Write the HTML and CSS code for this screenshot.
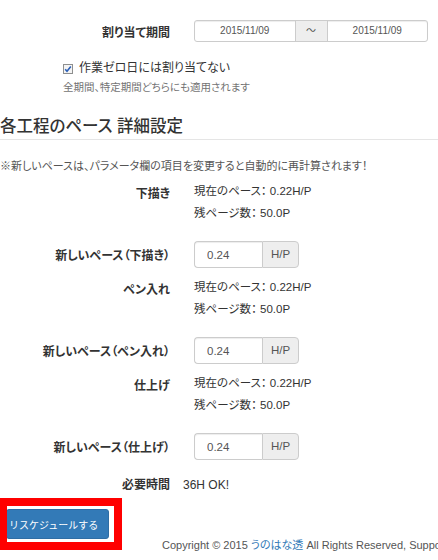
FILE: index.html
```html
<!DOCTYPE html>
<html lang="ja">
<head>
    <meta charset="UTF-8">
    <meta name="viewport" content="width=device-width, initial-scale=1.0">
    <title>リスケジュール</title>
    <link rel="stylesheet" href="styles.css">
</head>
<body>
    <div class="page">
        <div class="form-row period-row">
            <label class="row-label">割り当て期間</label>
            <div class="date-group">
                <span class="date-input">2015/11/09</span>
                <span class="addon tilde">〜</span>
                <span class="date-input">2015/11/09</span>
            </div>
        </div>

        <div class="skip-zero">
            <label class="check">
                <svg class="check-box" width="10" height="10" viewBox="0 0 10 10">
                    <rect x="0.5" y="0.5" width="9" height="9" fill="#f4f4f4" stroke="#8e8f8f"/>
                    <path d="M2.2 5.2 L4 7.2 L7.8 2.6" fill="none" stroke="#2a5fb8" stroke-width="1.6"/>
                </svg>
                作業ゼロ日には割り当てない
            </label>
            <p class="help">全期間、特定期間どちらにも適用されます</p>
        </div>

        <h3 class="section-title">各工程のペース 詳細設定</h3>
        <p class="note">※新しいペースは、パラメータ欄の項目を変更すると自動的に再計算されます！</p>

        <!-- 下描き -->
        <div class="form-row process first">
            <div class="row-label">下描き</div>
            <div class="info">
                <p>現在のペース： 0.22H/P</p>
                <p>残ページ数： 50.0P</p>
            </div>
        </div>
        <div class="form-row pace">
            <label class="row-label">新しいペース（下描き）</label>
            <div class="pace-group">
                <input type="text" value="0.24">
                <span class="addon">H/P</span>
            </div>
        </div>

        <!-- ペン入れ -->
        <div class="form-row process">
            <div class="row-label">ペン入れ</div>
            <div class="info">
                <p>現在のペース： 0.22H/P</p>
                <p>残ページ数： 50.0P</p>
            </div>
        </div>
        <div class="form-row pace">
            <label class="row-label">新しいペース（ペン入れ）</label>
            <div class="pace-group">
                <input type="text" value="0.24">
                <span class="addon">H/P</span>
            </div>
        </div>

        <!-- 仕上げ -->
        <div class="form-row process">
            <div class="row-label">仕上げ</div>
            <div class="info">
                <p>現在のペース： 0.22H/P</p>
                <p>残ページ数： 50.0P</p>
            </div>
        </div>
        <div class="form-row pace">
            <label class="row-label">新しいペース（仕上げ）</label>
            <div class="pace-group">
                <input type="text" value="0.24">
                <span class="addon">H/P</span>
            </div>
        </div>

        <div class="form-row total">
            <div class="row-label">必要時間</div>
            <div class="total-value">36H OK!</div>
        </div>

        <div class="actions">
            <div class="highlight">
                <button type="button" class="btn-primary">リスケジュールする</button>
            </div>
            <p class="copyright">Copyright © 2015 <a href="#">うのはな透</a> All Rights Reserved, Suppo</p>
        </div>
    </div>
</body>
</html>
```

FILE: styles.css
```css
html, body {
    margin: 0;
    overflow: hidden;
}
body {
    font-family: "Liberation Sans", "Noto Sans CJK JP", sans-serif;
    font-size: 12px;
    color: #333;
    background: #fff;
    font-feature-settings: "palt";
}
p {
    margin: 0;
}
.page {
    padding-top: 20px;
}
.form-row {
    display: grid;
    grid-template-columns: 170px 1fr;
    column-gap: 24px;
    align-items: center;
}
.row-label {
    text-align: right;
    font-size: 12px;
    font-weight: bold;
    white-space: nowrap;
}
.period-row .row-label {
    padding-left: 2px;
}
.date-group {
    display: flex;
    width: 234px;
    height: 22px;
    border: 1px solid #ccc;
    border-radius: 3px;
    box-sizing: border-box;
    box-shadow: inset 0 1px 1px rgba(0, 0, 0, 0.075);
}
.date-input {
    flex: 1;
    text-align: center;
    line-height: 20px;
    font-size: 10px;
    color: #555;
}
.addon {
    background: #eee;
    color: #555;
    text-align: center;
}
.tilde {
    width: 31px;
    line-height: 20px;
    border-left: 1px solid #ccc;
    border-right: 1px solid #ccc;
    font-size: 10px;
}
.skip-zero {
    margin: 17px 0 0 63px;
    line-height: 19px;
}
.check {
    display: flex;
    align-items: center;
    gap: 6px;
}
.check-box {
    flex: none;
}
.help {
    font-size: 10.5px;
    color: #737373;
}
.section-title {
    margin: 19px 0 0;
    padding-bottom: 3px;
    font-size: 16.5px;
    line-height: 20px;
    font-weight: 500;
    color: #333;
    border-bottom: 1px solid #e5e5e5;
}
.note {
    margin-top: 17px;
    line-height: 18px;
    font-size: 11px;
    color: #555;
}
.process {
    margin-top: 8px;
    align-items: start;
}
.process.first {
    margin-top: 5px;
}
.process .row-label {
    padding-top: 4px;
}
.info p {
    line-height: 22px;
    font-size: 11.5px;
}
.pace {
    margin-top: 17px;
}
.pace-group {
    display: flex;
    width: 105px;
    height: 27px;
}
.pace-group input {
    width: 68px;
    box-sizing: border-box;
    margin: 0;
    padding: 0 12px;
    border: 1px solid #ccc;
    border-right: none;
    border-radius: 4px 0 0 4px;
    box-shadow: inset 0 1px 1px rgba(0, 0, 0, 0.075);
    font-family: inherit;
    font-size: 11.5px;
    color: #555;
}
.pace-group .addon {
    flex: 1;
    line-height: 25px;
    font-size: 11.5px;
    border: 1px solid #ccc;
    border-radius: 0 4px 4px 0;
}
.total {
    margin-top: 15px;
    line-height: 20px;
}
.total-value {
    margin-left: -11px;
}
.actions {
    display: flex;
    align-items: flex-start;
    margin-top: 3px;
}
.highlight {
    flex: none;
    display: flex;
    width: 101px;
    height: 33px;
    padding: 3px 6px 0 0;
    border: 8px solid #f00;
    border-left-width: 7px;
    overflow: hidden;
}
.btn-primary {
    flex: none;
    height: 30px;
    margin-left: -1px;
    padding: 0 10px 0 2px;
    border: 1px solid #2e6da4;
    border-radius: 3px;
    background: #337ab7;
    color: #fff;
    font-family: inherit;
    font-size: 10px;
    cursor: pointer;
}
.copyright {
    margin: 38px 0 0 40px;
    line-height: 18px;
    font-size: 11px;
    white-space: nowrap;
    color: #555;
}
.copyright a {
    color: #337ab7;
    text-decoration: none;
}
```
